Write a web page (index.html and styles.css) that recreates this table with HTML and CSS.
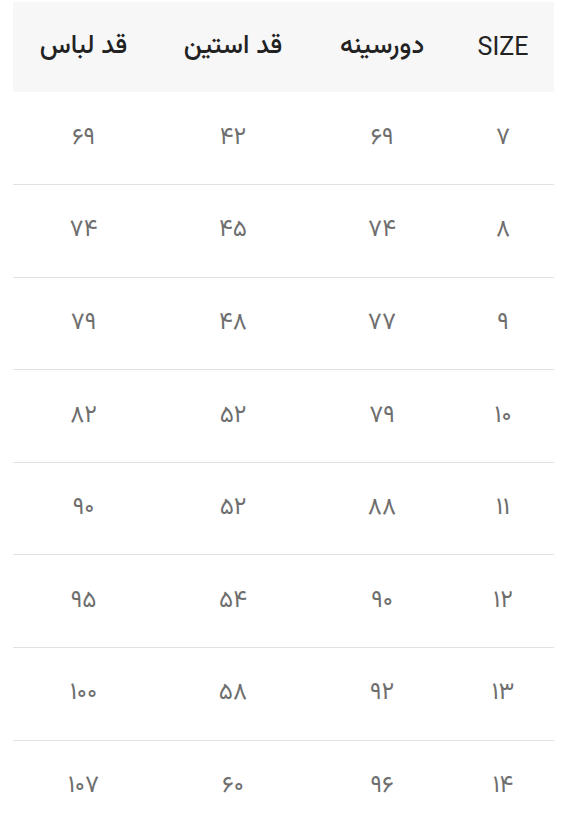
FILE: index.html
```html
<!DOCTYPE html>
<html lang="fa" dir="rtl">
<head>
<meta charset="utf-8">
<link rel="stylesheet" href="styles.css">
</head>
<body>
<div class="wrap">
<table class="sizes">
<colgroup>
<col class="c1"><col class="c2"><col class="c3"><col class="c4">
</colgroup>
<thead>
<tr><th class="latin">SIZE</th><th>دورسینه</th><th>قد استین</th><th>قد لباس</th></tr>
</thead>
<tbody>
<tr><td>۷</td><td>۶۹</td><td>۴۲</td><td>۶۹</td></tr>
<tr><td>۸</td><td>۷۴</td><td>۴۵</td><td>۷۴</td></tr>
<tr><td>۹</td><td>۷۷</td><td>۴۸</td><td>۷۹</td></tr>
<tr><td>۱۰</td><td>۷۹</td><td>۵۲</td><td>۸۲</td></tr>
<tr><td>۱۱</td><td>۸۸</td><td>۵۲</td><td>۹۰</td></tr>
<tr><td>۱۲</td><td>۹۰</td><td>۵۴</td><td>۹۵</td></tr>
<tr><td>۱۳</td><td>۹۲</td><td>۵۸</td><td>۱۰۰</td></tr>
<tr><td>۱۴</td><td>۹۶</td><td>۶۰</td><td>۱۰۷</td></tr>
</tbody>
</table>
</div>
</body>
</html>
```
FILE: styles.css
```css
html, body {
  margin: 0;
  padding: 0;
  background: #ffffff;
}
body {
  font-family: Vazirmatn, "Noto Sans Arabic", Roboto, "DejaVu Sans", sans-serif;
  overflow: hidden;
}
.wrap {
  padding: 2px 20px 0 13px;
}
.sizes {
  width: 541px;
  table-layout: fixed;
  border-collapse: collapse;
}
.c1 { width: 102px; }
.c2 { width: 140px; }
.c3 { width: 158px; }
.c4 { width: 141px; }
.sizes th {
  height: 90px;
  padding: 0 0 2px 0;
  box-sizing: border-box;
  background: #f7f7f7;
  color: #222222;
  font-size: 26px;
  font-weight: 500;
  text-align: center;
  vertical-align: middle;
}
.sizes th.latin {
  font-family: Roboto, sans-serif;
  font-size: 25px;
  font-weight: 400;
}
.sizes td {
  height: 92.6px;
  padding: 0 0 1px 0;
  box-sizing: border-box;
  border-bottom: 1px solid #e2e2e2;
  color: #6e6e6e;
  font-size: 24px;
  font-weight: 400;
  text-align: center;
  vertical-align: middle;
}
```
